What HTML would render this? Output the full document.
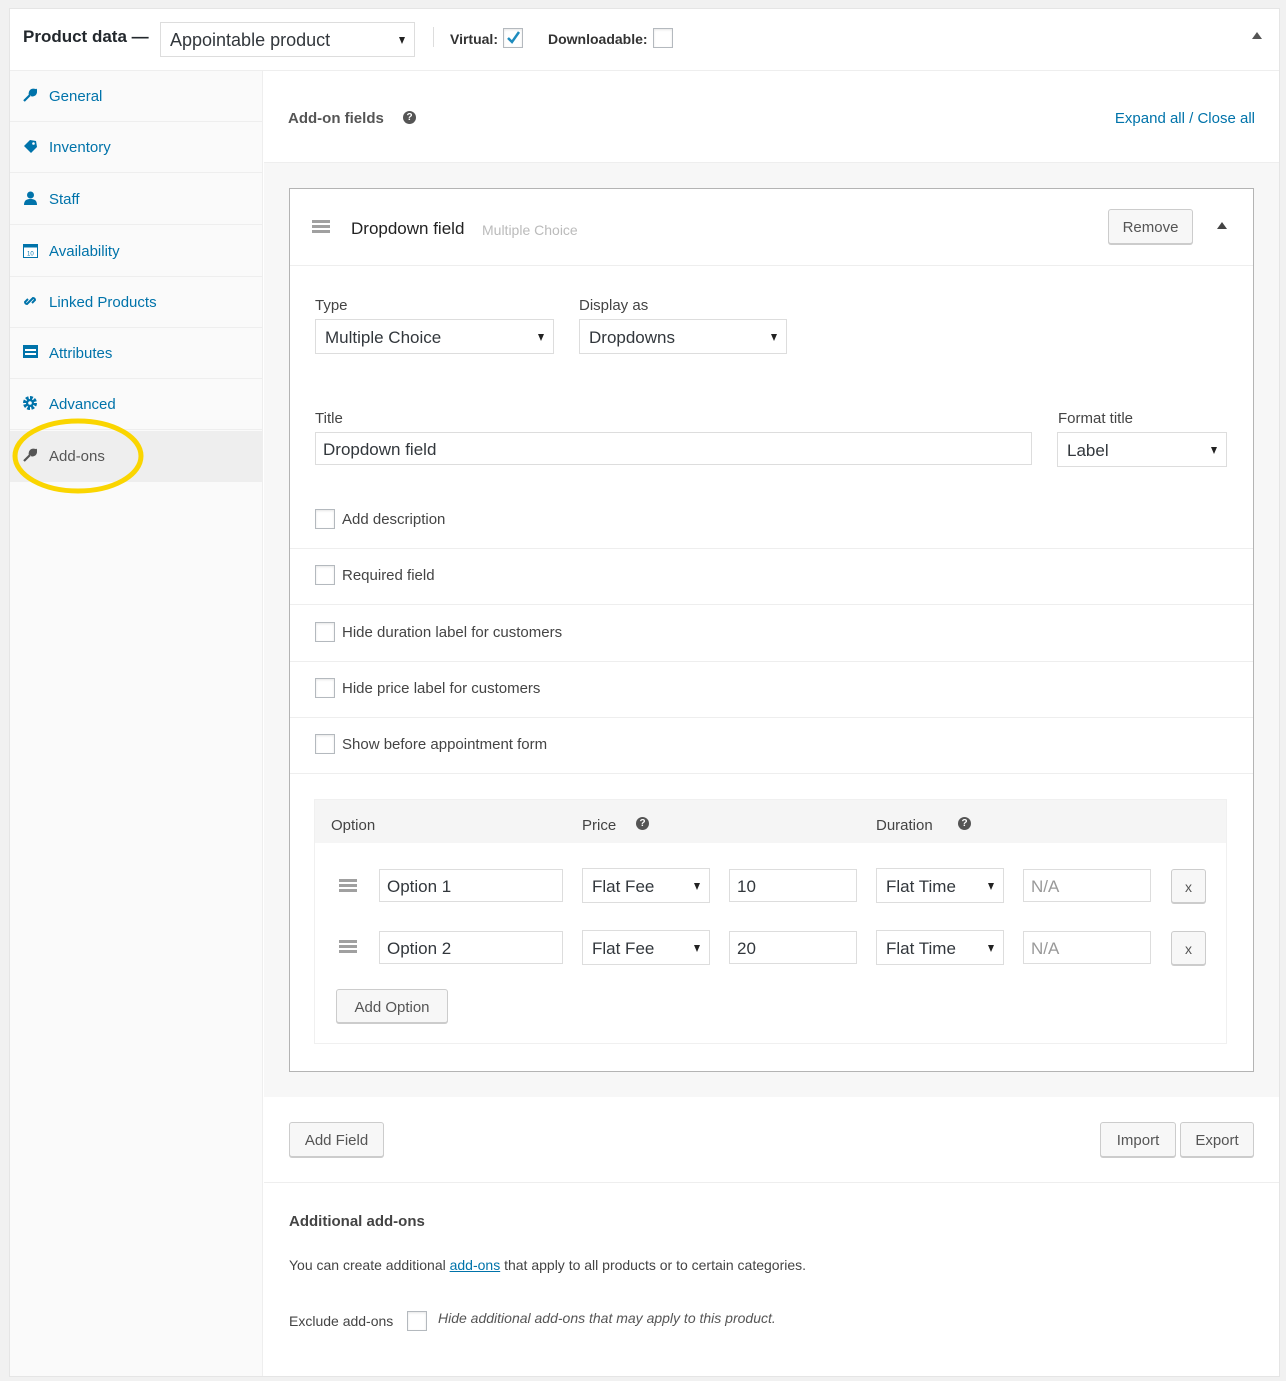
<!DOCTYPE html>
<html><head><meta charset="utf-8">
<style>
*{box-sizing:border-box;margin:0;padding:0}
body{width:1286px;height:1381px;background:#f1f1f1;font-family:"Liberation Sans",sans-serif;color:#444;position:relative;overflow:hidden}
.a{position:absolute}
.t{position:absolute;white-space:nowrap;line-height:20px;margin-top:2px}
.sel,.inp{position:absolute;background:#fff;border:1px solid #ddd;font-size:17px;color:#32373c;padding-left:9px;display:flex;align-items:center;white-space:nowrap;padding-top:2px}
.sel:after{content:"";position:absolute;right:9px;top:50%;margin-top:-3px;border-left:3.5px solid transparent;border-right:3.5px solid transparent;border-top:7px solid #222}
.btn{position:absolute;background:#f7f7f7;border:1px solid #ccc;border-radius:3px;box-shadow:0 1px 0 #ccc;font-size:15px;color:#555;display:flex;align-items:center;justify-content:center;padding-top:2px}
.cb{position:absolute;width:20px;height:20px;border:1px solid #b4b9be;background:#fff;box-shadow:inset 0 1px 2px rgba(0,0,0,.1)}
.nav{position:absolute;left:10px;width:253px;height:51px;border-bottom:1px solid #eee}
.nav span{position:absolute;left:39px;top:16px;font-size:15px;color:#0073aa;line-height:20px}
.nav svg{position:absolute;left:13px;top:17px}
.hr{position:absolute;left:290px;width:963px;height:1px;background:#eee}
.help{position:absolute;width:13px;height:13px;border-radius:50%;background:#555;color:#fff;font-size:10px;font-weight:bold;text-align:center;line-height:13px}
.ham{position:absolute;width:18px;height:13px;border-top:3px solid #a0a0a0;border-bottom:3px solid #a0a0a0}
.ham:after{content:"";position:absolute;left:0;right:0;top:2px;height:3px;background:#a0a0a0}
</style></head><body>
<div class="a" style="left:9px;top:8px;width:1271px;height:1369px;background:#fff;border:1px solid #e5e5e5"></div>
<div class="a" style="left:10px;top:70px;width:1269px;height:1px;background:#eee"></div>
<div class="t" style="left:23px;top:25px;font-size:17px;font-weight:bold;color:#23282d">Product data —</div>
<div class="sel" style="left:160px;top:22px;width:255px;height:35px;font-size:18px">Appointable product</div>
<div class="a" style="left:433px;top:27px;width:1px;height:20px;background:#ddd"></div>
<div class="t" style="left:450px;top:27px;font-size:14px;font-weight:bold;color:#333">Virtual:</div>
<div class="cb" style="left:503px;top:28px"></div>
<svg class="a" style="left:505px;top:29px" width="17" height="17" viewBox="0 0 17 17"><path d="M3 9 L7 13 L14 3" stroke="#1e8cbe" stroke-width="2.5" fill="none"/></svg>
<div class="t" style="left:548px;top:27px;font-size:14px;font-weight:bold;color:#333">Downloadable:</div>
<div class="cb" style="left:653px;top:28px"></div>
<div class="a" style="left:1252px;top:32px;border-left:5px solid transparent;border-right:5px solid transparent;border-bottom:7px solid #555"></div>
<div class="a" style="left:10px;top:71px;width:253px;height:1305px;background:#fafafa;border-right:1px solid #eee"></div>
<div class="nav" style="top:71px"><svg width="14" height="14" viewBox="0 0 14 14"><path d="M1 13 L7 7 M7 7 C6 4 8 1 12 2 L10 4 L11 5 L13 3 C13 7 10 8 8 7" stroke="#0073aa" stroke-width="2.2" fill="#0073aa"/></svg><span>General</span></div>
<div class="nav" style="top:122px"><svg width="15" height="15" viewBox="0 0 15 15"><path d="M1 7 L7 1 L13 2 L14 8 L8 14 Z" fill="#0073aa"/><circle cx="10.5" cy="4.5" r="1.3" fill="#fff"/></svg><span>Inventory</span></div>
<div class="nav" style="top:174px"><svg width="15" height="15" viewBox="0 0 15 15"><circle cx="7.5" cy="4" r="3.5" fill="#0073aa"/><path d="M1 14 C1 9 4 8 7.5 8 C11 8 14 9 14 14 Z" fill="#0073aa"/></svg><span>Staff</span></div>
<div class="nav" style="top:226px"><svg width="15" height="15" viewBox="0 0 15 15"><rect x="0.5" y="1.5" width="14" height="13" fill="#fff" stroke="#0073aa"/><rect x="0.5" y="1.5" width="14" height="3" fill="#0073aa"/><text x="4" y="12.5" font-size="6" fill="#0073aa" font-family="Liberation Sans">10</text></svg><span>Availability</span></div>
<div class="nav" style="top:277px"><svg width="14" height="14" viewBox="0 0 14 14"><path d="M6 8 L4 10 A2 2 0 0 1 2 8 L5 5 M8 6 L10 4 A2 2 0 0 1 12 6 L9 9 M5 9 L9 5" stroke="#0073aa" stroke-width="2" fill="none"/></svg><span>Linked Products</span></div>
<div class="nav" style="top:328px"><svg width="15" height="13" viewBox="0 0 15 13"><rect width="15" height="13" fill="#0073aa"/><rect x="2" y="4" width="11" height="2" fill="#fff"/><rect x="2" y="8" width="11" height="2" fill="#fff"/></svg><span>Attributes</span></div>
<div class="nav" style="top:379px"><svg width="14" height="14" viewBox="0 0 14 14"><circle cx="7" cy="7" r="5" fill="none" stroke="#0073aa" stroke-width="4" stroke-dasharray="2.6 1.3"/><circle cx="7" cy="7" r="4" fill="#0073aa"/><circle cx="7" cy="7" r="1.8" fill="#fff"/></svg><span>Advanced</span></div>
<div class="nav" style="top:431px;background:#eee"><svg width="14" height="14" viewBox="0 0 14 14"><path d="M1 13 L7 7 M7 7 C6 4 8 1 12 2 L10 4 L11 5 L13 3 C13 7 10 8 8 7" stroke="#555" stroke-width="2.2" fill="#555"/></svg><span style="color:#555">Add-ons</span></div>
<svg class="a" style="left:0;top:410px" width="160" height="100"><ellipse cx="78" cy="46" rx="63" ry="35" fill="none" stroke="#fad500" stroke-width="5"/></svg>
<div class="t" style="left:288px;top:107px;font-size:15px;font-weight:bold;color:#555">Add-on fields</div>
<div class="help" style="left:403px;top:111px">?</div>
<div class="t" style="right:31px;top:107px;font-size:15px;color:#0073aa">Expand all / Close all</div>
<div class="a" style="left:264px;top:162px;width:1015px;height:935px;background:#f7f7f7;border-top:1px solid #eee"></div>
<div class="a" style="left:289px;top:188px;width:965px;height:884px;background:#fff;border:1px solid #b4b4b4"></div>
<div class="hr" style="top:265px"></div>
<div class="ham" style="left:312px;top:220px"></div>
<div class="t" style="left:351px;top:217px;font-size:17px;color:#222">Dropdown field</div>
<div class="t" style="left:482px;top:218px;font-size:14px;color:#bbb">Multiple Choice</div>
<div class="btn" style="left:1108px;top:209px;width:85px;height:35px">Remove</div>
<div class="a" style="left:1217px;top:222px;border-left:5px solid transparent;border-right:5px solid transparent;border-bottom:7px solid #444"></div>
<div class="t" style="left:315px;top:294px;font-size:15px">Type</div>
<div class="sel" style="left:315px;top:319px;width:239px;height:35px">Multiple Choice</div>
<div class="t" style="left:579px;top:294px;font-size:15px">Display as</div>
<div class="sel" style="left:579px;top:319px;width:208px;height:35px">Dropdowns</div>
<div class="t" style="left:315px;top:407px;font-size:15px">Title</div>
<div class="inp" style="left:315px;top:432px;width:717px;height:33px;padding-left:7px">Dropdown field</div>
<div class="t" style="left:1058px;top:407px;font-size:15px">Format title</div>
<div class="sel" style="left:1057px;top:432px;width:170px;height:35px">Label</div>
<div class="cb" style="left:315px;top:509px"></div><div class="t" style="left:342px;top:508px;font-size:15px">Add description</div>
<div class="hr" style="top:548px"></div>
<div class="cb" style="left:315px;top:565px"></div><div class="t" style="left:342px;top:564px;font-size:15px">Required field</div>
<div class="hr" style="top:604px"></div>
<div class="cb" style="left:315px;top:622px"></div><div class="t" style="left:342px;top:621px;font-size:15px">Hide duration label for customers</div>
<div class="hr" style="top:661px"></div>
<div class="cb" style="left:315px;top:678px"></div><div class="t" style="left:342px;top:677px;font-size:15px">Hide price label for customers</div>
<div class="hr" style="top:717px"></div>
<div class="cb" style="left:315px;top:734px"></div><div class="t" style="left:342px;top:733px;font-size:15px">Show before appointment form</div>
<div class="hr" style="top:773px"></div>
<div class="a" style="left:314px;top:799px;width:913px;height:245px;background:#fff;border:1px solid #f0f0f0"></div>
<div class="a" style="left:315px;top:800px;width:911px;height:43px;background:#f5f5f5"></div>
<div class="t" style="left:331px;top:814px;font-size:15px">Option</div>
<div class="t" style="left:582px;top:814px;font-size:15px">Price</div><div class="help" style="left:636px;top:817px">?</div>
<div class="t" style="left:876px;top:814px;font-size:15px">Duration</div><div class="help" style="left:958px;top:817px">?</div>
<div class="ham" style="left:339px;top:879px"></div>
<div class="inp" style="left:379px;top:869px;width:184px;height:33px;padding-left:7px">Option 1</div>
<div class="sel" style="left:582px;top:868px;width:128px;height:35px">Flat Fee</div>
<div class="inp" style="left:729px;top:869px;width:128px;height:33px;padding-left:7px">10</div>
<div class="sel" style="left:876px;top:868px;width:128px;height:35px">Flat Time</div>
<div class="inp" style="left:1023px;top:869px;width:128px;height:33px;padding-left:7px;color:#999">N/A</div>
<div class="btn" style="left:1171px;top:869px;width:35px;height:34px;font-size:14px">x</div>
<div class="ham" style="left:339px;top:940px"></div>
<div class="inp" style="left:379px;top:931px;width:184px;height:33px;padding-left:7px">Option 2</div>
<div class="sel" style="left:582px;top:930px;width:128px;height:35px">Flat Fee</div>
<div class="inp" style="left:729px;top:931px;width:128px;height:33px;padding-left:7px">20</div>
<div class="sel" style="left:876px;top:930px;width:128px;height:35px">Flat Time</div>
<div class="inp" style="left:1023px;top:931px;width:128px;height:33px;padding-left:7px;color:#999">N/A</div>
<div class="btn" style="left:1171px;top:931px;width:35px;height:34px;font-size:14px">x</div>
<div class="btn" style="left:336px;top:989px;width:112px;height:34px">Add Option</div>
<div class="btn" style="left:289px;top:1122px;width:95px;height:35px">Add Field</div>
<div class="btn" style="left:1100px;top:1122px;width:76px;height:35px">Import</div>
<div class="btn" style="left:1180px;top:1122px;width:74px;height:35px">Export</div>
<div class="a" style="left:264px;top:1182px;width:1015px;height:1px;background:#eee"></div>
<div class="t" style="left:289px;top:1210px;font-size:15px;font-weight:bold;color:#444">Additional add-ons</div>
<div class="t" style="left:289px;top:1253px;font-size:14px;color:#444">You can create additional <span style="color:#0073aa;text-decoration:underline">add-ons</span> that apply to all products or to certain categories.</div>
<div class="t" style="left:289px;top:1309px;font-size:14px;color:#444">Exclude add-ons</div>
<div class="cb" style="left:407px;top:1311px"></div>
<div class="t" style="left:438px;top:1306px;font-size:14px;font-style:italic;color:#555">Hide additional add-ons that may apply to this product.</div>
</body></html>
